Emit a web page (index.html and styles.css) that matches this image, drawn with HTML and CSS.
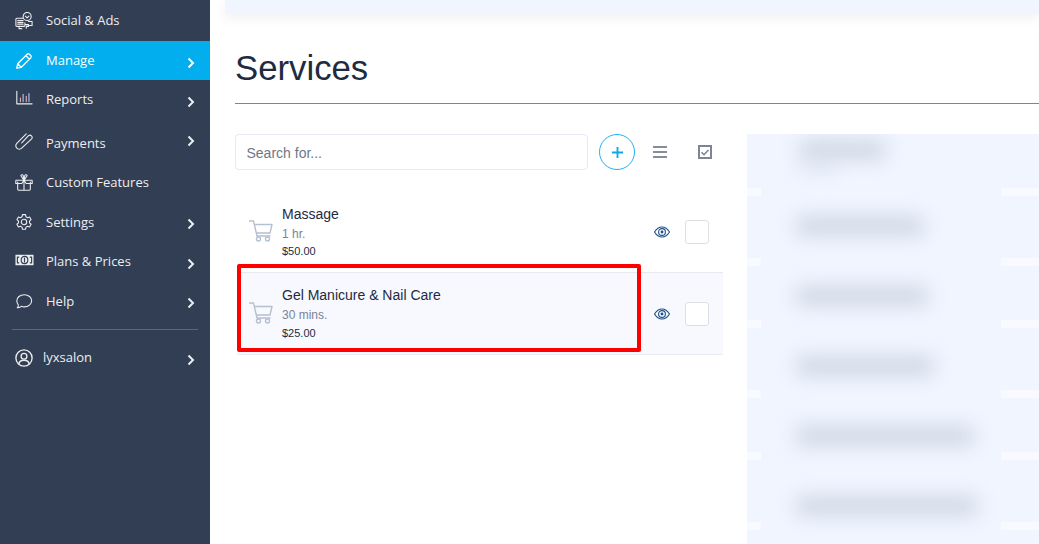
FILE: index.html
```html
<!DOCTYPE html>
<html lang="en">
<head>
<meta charset="utf-8">
<title>Services</title>
<link rel="stylesheet" href="styles.css">
</head>
<body>
<div class="app">
  <nav class="sidebar">
    <a class="nav-item">
      <svg class="nav-icon" viewBox="0 0 20 20"><path d="M9 7H2a1 1 0 0 0-1 1v7a1 1 0 0 0 1 1h8a1 1 0 0 0 1-1v-3M3 9.500h6M3 11.500h6M3 13.500h6M4.500 16v2.500h3M11 14h4v2h-2.500v2M15 10.500h4V15h-4"/><circle cx="13.500" cy="5" r="4.500"/><path d="M11.500 4.500l2 2 2-2"/></svg>
      <span>Social &amp; Ads</span>
    </a>
    <a class="nav-item active">
      <svg class="nav-icon" viewBox="0 0 20 20"><path d="M2 18l1-5L13.500 2.500a1.800 1.800 0 0 1 2.500 0l1.500 1.500a1.800 1.800 0 0 1 0 2.500L7 17zM12 4l4 4M3 13l4 4"/></svg>
      <span>Manage</span>
      <svg class="chev" viewBox="0 0 8 12"><path d="M1.500 1.500L6 6l-4.500 4.500"/></svg>
    </a>
    <a class="nav-item">
      <svg class="nav-icon up" viewBox="0 0 20 20"><path d="M2 2.500V16.500H19"/><path class="bar-a" d="M6 10v4M12.500 8v6"/><path class="bar-b" d="M9 6v8M15.500 5v9"/></svg>
      <span>Reports</span>
      <svg class="chev" viewBox="0 0 8 12"><path d="M1.500 1.500L6 6l-4.500 4.500"/></svg>
    </a>
    <a class="nav-item pay">
      <svg class="nav-icon clip" viewBox="0 0 20 20"><path d="M12.500 1L2 11.500a3.800 3.800 0 0 0 5.400 5.400L18.500 6.500a2.500 2.500 0 0 0-3.500-3.500L7.500 11"/></svg>
      <span>Payments</span>
      <svg class="chev high" viewBox="0 0 8 12"><path d="M1.500 1.500L6 6l-4.500 4.500"/></svg>
    </a>
    <a class="nav-item">
      <svg class="nav-icon" viewBox="0 0 20 20"><path d="M3 9v8a1 1 0 0 0 1 1h12a1 1 0 0 0 1-1V9M10 7v11M10 7L1 7 .8 10.500H7.500zM10 7h9l.2 3.500H12.500zM10 7L6.500 2a1.500 1.500 0 0 1 2.500-.8zM10 7l3.500-5a1.500 1.500 0 0 0-2.500-.8z"/></svg>
      <span>Custom Features</span>
    </a>
    <a class="nav-item">
      <svg class="nav-icon" viewBox="0 0 20 20"><path d="M8.300 1.800h3.400l.5 2.400 1.700 1 2.300-.8 1.700 3-1.800 1.600v1.900l1.800 1.600-1.700 3-2.300-.8-1.700 1-.5 2.400H8.300l-.5-2.400-1.700-1-2.300.8-1.700-3L3.900 11V9L2.100 7.400l1.700-3 2.300.8 1.700-1z"/><circle cx="10" cy="10" r="3"/></svg>
      <span>Settings</span>
      <svg class="chev" viewBox="0 0 8 12"><path d="M1.500 1.500L6 6l-4.500 4.500"/></svg>
    </a>
    <a class="nav-item">
      <svg class="nav-icon wide up" viewBox="0 0 20 14"><path class="fill" d="M.5 1.500h19v11H.5z"/><path class="cut" d="M4 4H2.500v6H4M16 4h1.500v6H16"/><ellipse class="cut" cx="10" cy="7" rx="3.500" ry="3.800"/><path class="cut" d="M10 5v4"/></svg>
      <span>Plans &amp; Prices</span>
      <svg class="chev" viewBox="0 0 8 12"><path d="M1.500 1.500L6 6l-4.500 4.500"/></svg>
    </a>
    <a class="nav-item">
      <svg class="nav-icon" viewBox="0 0 20 20"><path d="M2.500 17.500c1-1 1.500-2 1.200-3.200a7 7 0 0 1-1.700-4.300C2 6 5.500 3 10.300 3S18.500 6 18.500 9.700s-3.600 6.800-8.200 6.800c-1.200 0-2.300-.2-3.300-.6-1.200 1-2.800 1.600-4.500 1.600z"/></svg>
      <span>Help</span>
      <svg class="chev" viewBox="0 0 8 12"><path d="M1.500 1.500L6 6l-4.500 4.500"/></svg>
    </a>
    <hr class="nav-rule">
    <a class="nav-item user">
      <svg class="nav-icon" viewBox="0 0 20 20"><circle cx="10" cy="10" r="9"/><circle cx="10" cy="8" r="3.200"/><path d="M4.300 16.500c.5-2.800 2.500-4 5.700-4s5.200 1.200 5.700 4"/></svg>
      <span>lyxsalon</span>
      <svg class="chev" viewBox="0 0 8 12"><path d="M1.500 1.500L6 6l-4.500 4.500"/></svg>
    </a>
  </nav>

  <main class="main">
    <div class="topbar"></div>
    <h1 class="title">Services</h1>
    <hr class="title-rule">
    <div class="columns">
      <section class="left">
        <div class="toolbar">
          <input class="search" type="text" placeholder="Search for...">
          <button class="add" type="button">
            <svg viewBox="0 0 14 14"><path d="M7 1v12M1 7h12"/></svg>
          </button>
          <svg class="tool-menu" viewBox="0 0 14 12"><path d="M0 1h14M0 6h14M0 11h14"/></svg>
          <svg class="tool-check" viewBox="0 0 14 14"><rect x="1" y="1" width="12" height="12"/><path d="M3.500 7.200l2.500 2.500 4.500-4.700"/></svg>
        </div>
        <div class="list">
          <article class="service">
            <svg class="cart" viewBox="0 0 24 22"><path d="M.5 1h4l3.500 15h13M5.300 4.500H23l-2 8.500H7.300"/><circle cx="9.500" cy="19" r="2"/><circle cx="18.500" cy="19" r="2"/></svg>
            <div class="info">
              <div class="name">Massage</div>
              <div class="dur">1 hr.</div>
              <div class="price">$50.00</div>
            </div>
            <svg class="eye" viewBox="0 0 16 12"><path d="M.5 6C2.500 2.800 5 1 8 1s5.500 1.800 7.500 5c-2 3.200-4.500 5-7.500 5S2.500 9.200.5 6z"/><circle cx="8" cy="6" r="3.400"/><circle class="pupil" cx="8" cy="6" r="1.400"/></svg>
            <span class="box"></span>
          </article>
          <article class="service second">
            <svg class="cart" viewBox="0 0 24 22"><path d="M.5 1h4l3.500 15h13M5.300 4.500H23l-2 8.500H7.300"/><circle cx="9.500" cy="19" r="2"/><circle cx="18.500" cy="19" r="2"/></svg>
            <div class="info">
              <div class="name">Gel Manicure &amp; Nail Care</div>
              <div class="dur">30 mins.</div>
              <div class="price">$25.00</div>
            </div>
            <svg class="eye" viewBox="0 0 16 12"><path d="M.5 6C2.500 2.800 5 1 8 1s5.500 1.800 7.500 5c-2 3.200-4.500 5-7.500 5S2.500 9.200.5 6z"/><circle cx="8" cy="6" r="3.400"/><circle class="pupil" cx="8" cy="6" r="1.400"/></svg>
            <span class="box"></span>
            <div class="highlight"></div>
          </article>
        </div>
      </section>
      <aside class="panel">
        <div class="panel-inner">
          <div class="ghost first"><i class="blob b1"></i><i class="blob b1s"></i></div>
          <div class="ghost"><i class="blob b2"></i></div>
          <div class="ghost"><i class="blob b3"></i></div>
          <div class="ghost"><i class="blob b4"></i></div>
          <div class="ghost"><i class="blob b5"></i></div>
          <div class="ghost"><i class="blob b6"></i></div>
        </div>
      </aside>
    </div>
  </main>
</div>
</body>
</html>
```
FILE: styles.css
```css
* { box-sizing: border-box; }
html, body { margin: 0; height: 544px; overflow: hidden; background: #fff; }
body { font-family: "Liberation Sans", Arial, sans-serif; color: #212b3f; }
.app { display: flex; height: 544px; }

/* Sidebar */
.sidebar {
  width: 210px; flex: none; height: 544px; background: #323e53; padding-top: 1px;
  font-family: "Open Sans", sans-serif; font-size: 13px; font-weight: 500; color: #eceef1;
  display: flex; flex-direction: column;
}
.nav-item { display: flex; align-items: center; height: 39.500px; padding-left: 15px; flex: none; }
.nav-item span { margin-left: 13px; margin-top: -1px; }
.nav-item.active { background: #03aeee; color: #fff; height: 39px; margin-top: .5px; }
.nav-item.pay { margin-top: 4px; }
.nav-icon {
  width: 18px; height: 18px; flex: none; fill: none; stroke: #eceef1; stroke-width: 1.200;
  stroke-linecap: round; stroke-linejoin: round;
}
.active .nav-icon { stroke: #fff; stroke-width: 1.500; }
.nav-icon.up { margin-top: -4px; }
.nav-icon.clip { margin-top: -2px; }
.nav-icon.wide { height: 14px; width: 19px; margin-left: -.5px; margin-right: -.5px; }
.bar-a { stroke: #f3b0b0; }
.bar-b { stroke: #a9d2ff; }
.fill { fill: #eceef1; stroke: none; }
.cut { stroke: #323e53; stroke-width: 1.200; fill: none; }
.chev {
  width: 8px; height: 12px; margin-left: auto; margin-right: 15px; margin-top: 4px; flex: none;
  fill: none; stroke: #eceef1; stroke-width: 2;
}
.active .chev { stroke: #fff; }
.chev.high { margin-top: -4px; }
.nav-rule { width: 186px; height: 1px; border: 0; background: #5c6778; margin: 8px 0 8px 12px; flex: none; }
.nav-item.user span { margin-left: 10px; margin-top: -2px; }
.nav-item.user .nav-icon { stroke-width: 1.500; }

/* Main */
.main { flex: 1; min-width: 0; padding-left: 25px; }
.topbar {
  height: 14px; margin-left: -10px; background: #f0f5ff;
  box-shadow: 0 4px 12px rgba(60, 70, 90, .08);
}
.title { margin: 32px 0 0; font-size: 34.750px; line-height: 44px; font-weight: 400; color: #212b3f; }
.title-rule { height: 1px; border: 0; background: #22a5dc; margin: 13px 0 0; }
.columns { display: flex; margin-top: 30px; align-items: flex-start; }
.left { width: 488px; flex: none; }
.toolbar { display: flex; align-items: center; height: 36px; }
.search {
  width: 353px; height: 36px; border: 1px solid #e6e9f4; border-radius: 4px; padding: 2px 11px 0 10.500px;
  font: 14px "Liberation Sans", Arial, sans-serif; outline: 0; background: #fff;
}
.search::placeholder { color: #6f7787; opacity: 1; }
.add {
  width: 36px; height: 36px; margin-left: 11px; padding: 0; border: 1px solid #1fb2f0;
  border-radius: 50%; background: #fff; display: flex; align-items: center; justify-content: center;
}
.add svg { width: 13px; height: 13px; fill: none; stroke: #0aa9ee; stroke-width: 2; }
.tool-menu { width: 14px; height: 12px; margin-left: 18px; fill: none; stroke: #868c98; stroke-width: 2; }
.tool-check { width: 14px; height: 14px; margin-left: 31px; fill: none; stroke: #7f8494; stroke-width: 2; }
.tool-check path { stroke-width: 1.600; }

.list { margin: 21px 0 0 2px; width: 486px; }
.service { position: relative; display: flex; align-items: center; height: 81px; padding-left: 12px; }
.service.second { height: 83px; background: #f8f9fe; border-top: 1px solid #e8eaf2; border-bottom: 1px solid #e8eaf2; }
.cart { width: 24px; height: 22px; flex: none; fill: none; stroke: #b5c0d0; stroke-width: 1.400; stroke-linejoin: round; stroke-linecap: round; margin-top: -2px; }
.info { margin-left: 9px; width: 372px; flex: none; align-self: flex-start; padding-top: 14px; }
.second .info { padding-top: 13px; }
.name { font-size: 14px; line-height: 18px; color: #212b3f; }
.dur { font-size: 12px; line-height: 18px; margin-top: 2px; color: #7a8396; }
.price { font-size: 11px; line-height: 18px; margin-top: -1px; color: #212b3f; }
.second .price { margin-top: 0; }
.eye { width: 16px; height: 12px; flex: none; fill: none; stroke: #1b4f85; stroke-width: 1.100; }
.pupil { fill: #1b4f85; stroke: none; }
.box { width: 24px; height: 24px; margin-left: 15px; flex: none; border: 1px solid #dedfe3; border-radius: 3px; background: #fff; }
.highlight {
  position: absolute; left: 0; top: -9px; width: 404px; height: 88px;
  border: 4px solid #ff0000; border-radius: 2px; pointer-events: none;
}

/* Blurred panel */
.panel {
  margin-left: 24px; flex: 1; height: 410px; padding: 0 38px 0 14px;
  background: repeating-linear-gradient(to bottom, #f0f5ff 0, #f0f5ff 54px, #f8faff 54px, #f8faff 62px, #f0f5ff 62px, #f0f5ff 124px, #f8faff 124px, #f8faff 132px);
  background-size: 100% 410px;
}
.panel-inner { background: #f0f5ff; height: 410px; overflow: hidden; }
.ghost { position: relative; height: 70px; }
.ghost.first { height: 62px; }
.blob { position: absolute; display: block; height: 16px; background: #c8d2df; filter: blur(10px); }
.b1 { left: 40px; top: 8px; width: 84px; height: 16px; }
.b1s { left: 40px; top: 27px; width: 34px; height: 8px; background: #d6deea; }
.b2 { left: 36px; top: 22px; width: 126px; }
.b3 { left: 36px; top: 22px; width: 130px; }
.b4 { left: 36px; top: 22px; width: 136px; }
.b5 { left: 36px; top: 22px; width: 176px; }
.b6 { left: 36px; top: 22px; width: 180px; }
```
